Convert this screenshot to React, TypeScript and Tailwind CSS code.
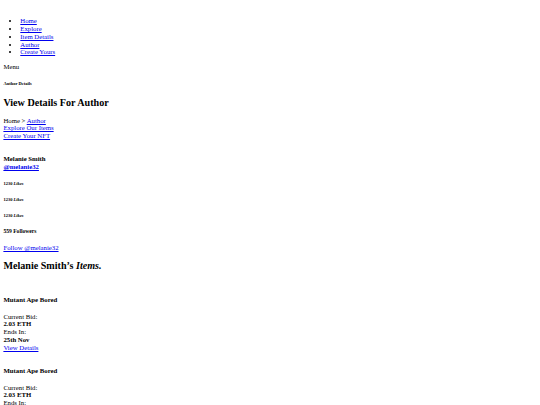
import React from 'react';

const navItems = ['Home', 'Explore', 'Item Details', 'Author', 'Create Yours'];

const linkCls = 'text-[#0000ee] underline';

const ItemCard: React.FC<{ title: string; bid: string; ends: string }> = ({ title, bid, ends }) => (
    <div>
        {/* image slot, nothing loads here */}
        <div className="h-[6.5px]" />
        <h4 className="my-[9px] text-[6.75px] font-bold">{title}</h4>
        <div>Current Bid:</div>
        <div className="font-bold">{bid}</div>
        <div>Ends In:</div>
        <div className="font-bold">{ends}</div>
        <a href="#" className={linkCls}>View Details</a>
    </div>
);

export default function App() {
    return (
        <div className="min-h-[405px] bg-white px-[3.4px] pt-[10.5px] font-['Liberation_Serif',serif] text-[6.75px] leading-[1.15] text-black">
            <nav>
                <ul className="my-[6.75px] list-disc pl-[16.9px]">
                    {navItems.map((item) => (
                        <li key={item}>
                            <a href="#" className={linkCls}>{item}</a>
                        </li>
                    ))}
                </ul>
                <div>Menu</div>
            </nav>

            <h6 className="my-[10.5px] text-[4.5px] font-bold">Author Details</h6>
            <h2 className="my-[8.4px] text-[10.125px] font-bold">View Details For Author</h2>
            <div>
                Home &gt; <a href="#" className={linkCls}>Author</a>
            </div>
            <div><a href="#" className={linkCls}>Explore Our Items</a></div>
            <div><a href="#" className={linkCls}>Create Your NFT</a></div>

            <div className="h-[6.5px]" />
            <h4 className="my-[9px] text-[6.75px] font-bold">
                <span className="block">Melanie Smith</span>
                <a href="#" className={linkCls}>@melanie32</a>
            </h4>
            <h6 className="my-[10.5px] text-[4.5px] font-bold">1230 <em>Likes</em></h6>
            <h6 className="my-[10.5px] text-[4.5px] font-bold">1230 <em>Likes</em></h6>
            <h6 className="my-[10.5px] text-[4.5px] font-bold">1230 <em>Likes</em></h6>
            <h5 className="my-[9.36px] text-[5.6px] font-bold">559 Followers</h5>
            <a href="#" className={linkCls}>Follow @melanie32</a>

            <h2 className="my-[8.4px] text-[10.125px] font-bold">
                Melanie Smith’s <em>Items.</em>
            </h2>

            <ItemCard title="Mutant Ape Bored" bid="2.03 ETH" ends="25th Nov" />
            <ItemCard title="Mutant Ape Bored" bid="2.03 ETH" ends="25th Nov" />
        </div>
    );
}
